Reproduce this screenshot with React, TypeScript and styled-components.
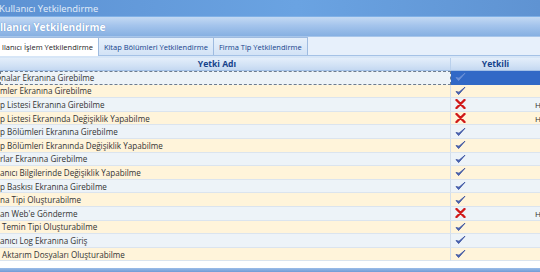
import styled, { createGlobalStyle, css } from 'styled-components';

interface Permission {
    name: string;
    allowed: boolean;
}

const permissions: Permission[] = [
    { name: 'nalar Ekranına Girebilme', allowed: true },
    { name: 'mler Ekranına Girebilme', allowed: true },
    { name: 'p Listesi Ekranına Girebilme', allowed: false },
    { name: 'p Listesi Ekranında Değişiklik Yapabilme', allowed: false },
    { name: 'p Bölümleri Ekranına Girebilme', allowed: true },
    { name: 'p Bölümleri Ekranında Değişiklik Yapabilme', allowed: true },
    { name: 'rlar Ekranına Girebilme', allowed: true },
    { name: 'anıcı Bilgilerinde Değişiklik Yapabilme', allowed: true },
    { name: 'p Baskısı Ekranına Girebilme', allowed: true },
    { name: 'na Tipi Oluşturabilme', allowed: true },
    { name: "an Web'e Gönderme", allowed: false },
    { name: ' Temin Tipi Oluşturabilme', allowed: true },
    { name: 'anıcı Log Ekranına Giriş', allowed: true },
    { name: ' Aktarım Dosyaları Oluşturabilme', allowed: true },
];

const tabs = ['llanıcı İşlem Yetkilendirme', 'Kitap Bölümleri Yetkilendirme', 'Firma Tip Yetkilendirme'];

const CheckIcon = ({ faded }: { faded?: boolean }) => (
    <svg width="11" height="10" viewBox="0 0 11 10">
        <path d="M1 5.5 L3.6 8.6 L10 1.2 L4 6.2 Z" fill={faded ? '#6f93d8' : '#4a67b8'} stroke={faded ? '#6f93d8' : '#31499a'} strokeWidth="0.8" strokeLinejoin="round" />
    </svg>
);

const CrossIcon = () => (
    <svg width="11" height="10" viewBox="0 0 11 10">
        <path d="M1.5 1 L9.5 9 M9.5 1 L1.5 9" stroke="#d01818" strokeWidth="2.4" strokeLinecap="round" />
    </svg>
);

const App = () => {
    return (<>
        <GlobalStyle />
        <Window>
            <TitleBar>Kullanıcı Yetkilendirme</TitleBar>
            <HeaderBar>llanıcı Yetkilendirme</HeaderBar>
            <TabStrip>
                {tabs.map((t, i) => (
                    <Tab key={t} $active={i === 0}>{t}</Tab>
                ))}
            </TabStrip>
            <TabBody>
                <Grid>
                    <HeadCell $shift={16}>Yetki Adı</HeadCell>
                    <HeadCell $last>Yetkili</HeadCell>
                    {permissions.map((p, i) => (
                        <Row key={i} $alt={i % 2 === 1}>
                            <NameCell $focused={i === 0}>{p.name}</NameCell>
                            <ValueCell $selected={i === 0}>
                                {p.allowed ? <CheckIcon faded={i === 0} /> : <CrossIcon />}
                                {!p.allowed && <Hint>H</Hint>}
                            </ValueCell>
                        </Row>
                    ))}
                </Grid>
            </TabBody>
            <Footer />
        </Window>
    </>);
};

const GlobalStyle = createGlobalStyle`
  html, body { margin: 0; padding: 0; background: #fff; }
  body { font-family: "Open Sans", "Noto Sans", sans-serif; }
`;

const Window = styled.div`
  width: 540px;
  height: 272px;
  overflow: hidden;
  display: flex;
  flex-direction: column;
  background: #fff;
`;

const TitleBar = styled.div`
  height: 16px;
  flex: none;
  display: flex;
  align-items: center;
  margin-left: -1px;
  font-size: 9.4px;
  color: #e4eefa;
  background: linear-gradient(90deg, #5d92d3 0%, #6aa3e2 55%, #5f93d2 100%);
  border-bottom: 1px solid #7fb0e6;
`;

const HeaderBar = styled.div`
  height: 19px;
  flex: none;
  display: flex;
  align-items: center;
  font-size: 10.2px;
  font-weight: 700;
  color: #ffffff;
  text-shadow: 0 0 1px #4d7fc0;
  background: linear-gradient(180deg, #c3d9f3 0%, #a4c4ec 45%, #86b0e2 100%);
  border-bottom: 1px solid #a8c6ea;
`;

const TabStrip = styled.div`
  height: 18px;
  flex: none;
  display: flex;
  align-items: flex-end;
  background: #e7f0fb;
  border-bottom: 1px solid #a5c2e6;
`;

const Tab = styled.div<{ $active?: boolean }>`
  height: 17px;
  display: flex;
  align-items: center;
  padding: 0 5px 0 2px;
  font-size: 7.5px;
  color: #15428b;
  border: 1px solid #9ebbe0;
  border-bottom: none;
  margin-right: -1px;
  ${({ $active }) => $active
        ? css`
            background: #ffffff;
            color: #1b1b1b;
            height: 18px;
            margin-bottom: -1px;
            border-left: none;
          `
        : css`
            background: linear-gradient(180deg, #e6f0fb 0%, #d3e3f6 100%);
            padding-left: 5px;
          `}
`;

const TabBody = styled.div`
  flex: 1;
  padding-top: 2px;
  background: linear-gradient(180deg, #d7e6f7 0px, #d7e6f7 2px, #fff 2px);
`;

const Grid = styled.div`
  display: grid;
  grid-template-columns: 451px 1fr;
`;

const HeadCell = styled.div<{ $last?: boolean; $shift?: number }>`
  height: 13px;
  display: flex;
  align-items: center;
  justify-content: center;
  padding-right: ${({ $shift }) => $shift ?? 0}px;
  font-size: 8.6px;
  font-weight: 700;
  color: #15428b;
  background: linear-gradient(180deg, #e4eefa 0%, #d2e2f5 60%, #c4d8f1 100%);
  border-bottom: 1px solid #a2c0e6;
  border-right: ${({ $last }) => ($last ? 'none' : '1px solid #b9d0ec')};
  box-sizing: border-box;
`;

const Row = styled.div<{ $alt?: boolean }>`
  display: contents;
  --row-bg: ${({ $alt }) => ($alt ? '#fff4da' : '#edf3f8')};
`;

const NameCell = styled.div<{ $focused?: boolean }>`
  height: 13.6px;
  box-sizing: border-box;
  display: flex;
  align-items: center;
  white-space: pre;
  font-size: 8.1px;
  color: #333;
  background: var(--row-bg);
  border-bottom: 1px solid #dbe4ee;
  border-right: 1px solid #d3deea;
  ${({ $focused }) => $focused && css`
    border: 1px dashed #6d7c8e;
  `}
`;

const ValueCell = styled.div<{ $selected?: boolean }>`
  position: relative;
  height: 13.6px;
  box-sizing: border-box;
  display: flex;
  align-items: center;
  padding-left: 4px;
  background: ${({ $selected }) => ($selected ? '#3169c6' : 'var(--row-bg)')};
  border-bottom: 1px solid ${({ $selected }) => ($selected ? '#3169c6' : '#dbe4ee')};
`;

const Hint = styled.span`
  position: absolute;
  left: 84px;
  font-size: 8px;
  color: #333;
`;

const Footer = styled.div`
  height: 4px;
  flex: none;
  margin-top: auto;
  background: linear-gradient(180deg, #9cbde8, #6f9bd6);
`;

export default App;
